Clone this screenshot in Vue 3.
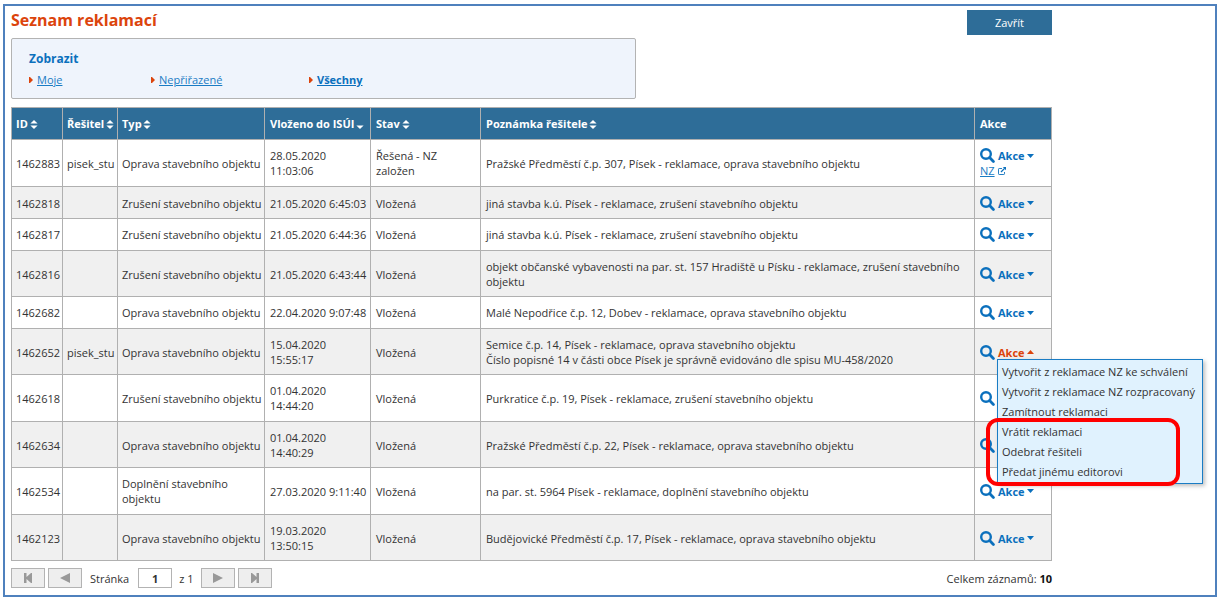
<script setup>
import { computed, ref } from 'vue'

const filters = [
  { label: 'Moje', active: false },
  { label: 'Nepřiřazené', active: false },
  { label: 'Všechny', active: true },
]

const columns = [
  { key: 'id', label: 'ID', sort: 'both' },
  { key: 'solver', label: 'Řešitel', sort: 'both' },
  { key: 'type', label: 'Typ', sort: 'both' },
  { key: 'date', label: 'Vloženo do ISÚI', sort: 'down' },
  { key: 'state', label: 'Stav', sort: 'both' },
  { key: 'note', label: 'Poznámka řešitele', sort: 'both' },
  { key: 'action', label: 'Akce', sort: '' },
]

const oprava = 'Oprava stavebního objektu'
const zruseni = 'Zrušení stavebního objektu'

const rows = [
  { id: '1462883', solver: 'pisek_stu', type: oprava, date: '28.05.2020 11:03:06', state: 'Řešená - NZ založen', note: ['Pražské Předměstí č.p. 307, Písek - reklamace, oprava stavebního objektu'], nz: true },
  { id: '1462818', solver: '', type: zruseni, date: '21.05.2020 6:45:03', state: 'Vložená', note: ['jiná stavba k.ú. Písek - reklamace, zrušení stavebního objektu'] },
  { id: '1462817', solver: '', type: zruseni, date: '21.05.2020 6:44:36', state: 'Vložená', note: ['jiná stavba k.ú. Písek - reklamace, zrušení stavebního objektu'] },
  { id: '1462816', solver: '', type: zruseni, date: '21.05.2020 6:43:44', state: 'Vložená', note: ['objekt občanské vybavenosti na par. st. 157 Hradiště u Písku - reklamace, zrušení stavebního objektu'] },
  { id: '1462682', solver: '', type: oprava, date: '22.04.2020 9:07:48', state: 'Vložená', note: ['Malé Nepodřice č.p. 12, Dobev - reklamace, oprava stavebního objektu'] },
  { id: '1462652', solver: 'pisek_stu', type: oprava, date: '15.04.2020 15:55:17', state: 'Vložená', note: ['Semice č.p. 14, Písek - reklamace, oprava stavebního objektu', 'Číslo popisné 14 v části obce Písek je správně evidováno dle spisu MU-458/2020'] },
  { id: '1462618', solver: '', type: zruseni, date: '01.04.2020 14:44:20', state: 'Vložená', note: ['Purkratice č.p. 19, Písek - reklamace, zrušení stavebního objektu'] },
  { id: '1462634', solver: '', type: oprava, date: '01.04.2020 14:40:29', state: 'Vložená', note: ['Pražské Předměstí č.p. 22, Písek - reklamace, oprava stavebního objektu'] },
  { id: '1462534', solver: '', type: 'Doplnění stavebního objektu', date: '27.03.2020 9:11:40', state: 'Vložená', note: ['na par. st. 5964 Písek - reklamace, doplnění stavebního objektu'] },
  { id: '1462123', solver: '', type: oprava, date: '19.03.2020 13:50:15', state: 'Vložená', note: ['Budějovické Předměstí č.p. 17, Písek - reklamace, oprava stavebního objektu'] },
]

const menu = [
  'Vytvořit z reklamace NZ ke schválení',
  'Vytvořit z reklamace NZ rozpracovaný',
  'Zamítnout reklamaci',
  'Vrátit reklamaci',
  'Odebrat řešiteli',
  'Předat jinému editorovi',
]

const openId = ref('1462652')
const page = ref('1')
const openIndex = computed(() => rows.findIndex((r) => r.id === openId.value))

function toggle(id) {
  openId.value = openId.value === id ? '' : id
}

// The open menu lies over the toggles of the two rows below it.
function isCovered(i) {
  return openIndex.value >= 0 && i > openIndex.value && i <= openIndex.value + 2
}
</script>

<template>
  <div class="frame">
    <main class="content">
      <header class="top">
        <h1>Seznam reklamací</h1>
        <button class="close" type="button">Zavřít</button>
      </header>

      <section class="filter">
        <h2>Zobrazit</h2>
        <nav class="links">
          <span v-for="f in filters" :key="f.label" class="link">
            <svg class="bullet" viewBox="0 0 4 6" aria-hidden="true"><path d="M0 0H1L4 3L1 6H0Z" fill="#dc440c" /></svg>
            <a href="#" :class="{ active: f.active }">{{ f.label }}</a>
          </span>
        </nav>
      </section>

      <table>
        <colgroup>
          <col v-for="c in columns" :key="c.key" :class="'c-' + c.key" />
        </colgroup>
        <thead>
          <tr>
            <th v-for="c in columns" :key="c.key" scope="col">
              {{ c.label }}
              <svg v-if="c.sort" class="sort" viewBox="0 0 8 10" aria-hidden="true">
                <path v-if="c.sort === 'both'" d="M0 4L4 0L8 4Z" fill="#fff" />
                <path d="M0 6H8L4 10Z" fill="#fff" />
              </svg>
            </th>
          </tr>
        </thead>
        <tbody>
          <tr v-for="(r, i) in rows" :key="r.id">
            <td>{{ r.id }}</td>
            <td>{{ r.solver }}</td>
            <td>{{ r.type }}</td>
            <td>{{ r.date }}</td>
            <td class="state">{{ r.state }}</td>
            <td><div v-for="line in r.note" :key="line">{{ line }}</div></td>
            <td>
              <div class="actions">
                <button class="detail" type="button" aria-label="Detail">
                  <svg viewBox="0 0 15 15" aria-hidden="true">
                    <circle cx="6" cy="6" r="4.8" fill="none" stroke="#0b70bd" stroke-width="2.4" />
                    <path d="M9.6 9.6L13.4 13.4" stroke="#0b70bd" stroke-width="2.8" stroke-linecap="round" />
                  </svg>
                </button>
                <button v-if="!isCovered(i)" class="toggle" :class="{ open: openId === r.id }" type="button" @click="toggle(r.id)">
                  Akce
                  <svg viewBox="0 0 7 4" aria-hidden="true">
                    <path :d="openId === r.id ? 'M0 4H7L3.5 0Z' : 'M0 0H7L3.5 4Z'" fill="currentColor" />
                  </svg>
                </button>
                <div v-if="openId === r.id" class="menu">
                  <button v-for="m in menu" :key="m" type="button">{{ m }}</button>
                  <div class="highlight"></div>
                </div>
              </div>
              <div v-if="r.nz" class="nz">
                <a href="#">NZ</a>
                <svg viewBox="0 0 8 8" fill="none" stroke="#0b70bd" aria-hidden="true">
                  <path d="M4 1.5H1.2Q.5 1.5 .5 2.2V6.8Q.5 7.5 1.2 7.5H5.8Q6.5 7.5 6.5 6.8V5" stroke-width=".9" />
                  <path d="M3 5L6.6 1.4" stroke-width="1.3" />
                  <path d="M4.8 0H8V3.2Z" fill="#0b70bd" stroke="none" />
                </svg>
              </div>
            </td>
          </tr>
        </tbody>
      </table>

      <footer class="pager">
        <button type="button" aria-label="První stránka">
          <svg viewBox="0 0 12 10" aria-hidden="true"><path d="M2 0H4.5V4L9 0H10V10H9L4.5 6V10H2Z" fill="#999" /></svg>
        </button>
        <button type="button" aria-label="Předchozí stránka">
          <svg viewBox="0 0 12 10" aria-hidden="true"><path d="M11 0V10L1 5Z" fill="#999" /></svg>
        </button>
        <label for="page">Stránka</label>
        <input id="page" v-model="page" type="text" />
        <span class="of">z 1</span>
        <button type="button" aria-label="Další stránka">
          <svg viewBox="0 0 12 10" aria-hidden="true"><path d="M1 0V10L11 5Z" fill="#999" /></svg>
        </button>
        <button type="button" aria-label="Poslední stránka">
          <svg viewBox="0 0 12 10" aria-hidden="true"><path d="M10 0H7.5V4L3 0H2V10H3L7.5 6V10H10Z" fill="#999" /></svg>
        </button>
        <span class="total">Celkem záznamů: <b>10</b></span>
      </footer>
    </main>
  </div>
</template>

<style>
body {
  background: #fff;
}
</style>

<style scoped>
.frame,
.frame * {
  box-sizing: border-box;
}
.frame {
  margin: 4px 3px 0;
  padding: 4px 163px 7px 6px;
  border: 2px solid #4f81bd;
  font-family: "Open Sans", "Noto Sans", sans-serif;
  font-size: 11px;
  line-height: 15px;
  color: #333;
}
button,
input {
  font: inherit;
  color: inherit;
}
button {
  padding: 0;
  border: 0;
  background: none;
  cursor: pointer;
}
svg {
  display: block;
}
a {
  color: #1a7cc4;
}
.top {
  display: flex;
  justify-content: space-between;
  height: 28px;
}
h1 {
  margin: 0;
  font-size: 16px;
  line-height: 20px;
  color: #dc440c;
}
.close {
  width: 85px;
  height: 25px;
  background: #2e6d98;
  color: #fff;
}
.filter {
  width: 60%;
  height: 61px;
  padding: 12px 17px;
  border: 1px solid #b3b3b3;
  border-radius: 2px;
  background: #eff4fc;
}
h2 {
  margin: 0 0 5px;
  font-size: 12px;
  line-height: 16px;
  color: #0b70bd;
}
.links {
  display: grid;
  grid-template-columns: 122px 158px 1fr;
}
.link {
  display: flex;
  align-items: center;
  gap: 4px;
}
.bullet {
  width: 4px;
  height: 6px;
}
.active {
  font-weight: 700;
  color: #0b70bd;
}
table {
  width: 100%;
  margin-top: 8px;
  border-collapse: collapse;
  table-layout: fixed;
}
.c-id { width: 51px; }
.c-solver { width: 55px; }
.c-type { width: 147px; }
.c-date { width: 106px; }
.c-state { width: 110px; }
.c-action { width: 77px; }
th,
td {
  border: 1px solid #b0b0b0;
  text-align: left;
  vertical-align: middle;
}
th {
  height: 32px;
  padding: 0 0 0 4px;
  background: #2e6d98;
  color: #fff;
  white-space: nowrap;
}
.sort {
  display: inline-block;
  width: 8px;
  height: 9px;
  margin-left: -1px;
  vertical-align: -1px;
}
td {
  height: 32px;
  padding: 8px 2px 8px 4px;
}
th:nth-child(n + 4),
td:nth-child(n + 4) {
  padding-left: 5px;
}
td.state {
  padding-right: 8px;
}
tbody tr:nth-child(even) {
  background: #f0f0f0;
}
tbody tr:nth-child(even) td {
  padding-bottom: 7px;
}
.actions {
  position: relative;
  display: flex;
  align-items: center;
  gap: 3px;
}
.detail svg {
  width: 15px;
  height: 15px;
}
.toggle {
  display: flex;
  align-items: center;
  gap: 2px;
  font-weight: 700;
  color: #0b70bd;
}
.toggle svg {
  width: 7px;
  height: 4px;
}
.toggle.open {
  color: #dc440c;
}
.nz {
  display: flex;
  align-items: center;
  gap: 3px;
}
.nz svg {
  width: 8px;
  height: 8px;
}
.menu {
  position: absolute;
  z-index: 1;
  top: 14px;
  left: 17px;
  display: flex;
  flex-direction: column;
  width: 206px;
  padding: 2px 4px 1px;
  border: 1px solid #1a7cc4;
  background: #e0f2fe;
  box-shadow: 2px 2px 4px rgba(0, 0, 0, 0.25);
}
.menu button {
  height: 20px;
  text-align: left;
  white-space: nowrap;
}
.highlight {
  position: absolute;
  top: 58px;
  left: -12px;
  width: 194px;
  height: 68px;
  border: 4px solid #f00;
  border-radius: 12px;
  pointer-events: none;
}
.pager {
  display: flex;
  align-items: center;
  margin-top: 7px;
}
.pager button {
  display: flex;
  align-items: center;
  justify-content: center;
  width: 34px;
  height: 20px;
  margin-right: 3px;
  border: 1px solid #b3b3b3;
  background: #eee;
}
.pager svg {
  width: 12px;
  height: 10px;
}
.pager label {
  margin: 0 9px 0 5px;
}
.pager input {
  width: 34px;
  height: 20px;
  border: 1px solid #b3b3b3;
  padding: 0;
  text-align: center;
  font-weight: 700;
}
.of {
  margin: 0 7px;
}
.total {
  margin-left: auto;
}
.total b {
  color: #111;
}
</style>
